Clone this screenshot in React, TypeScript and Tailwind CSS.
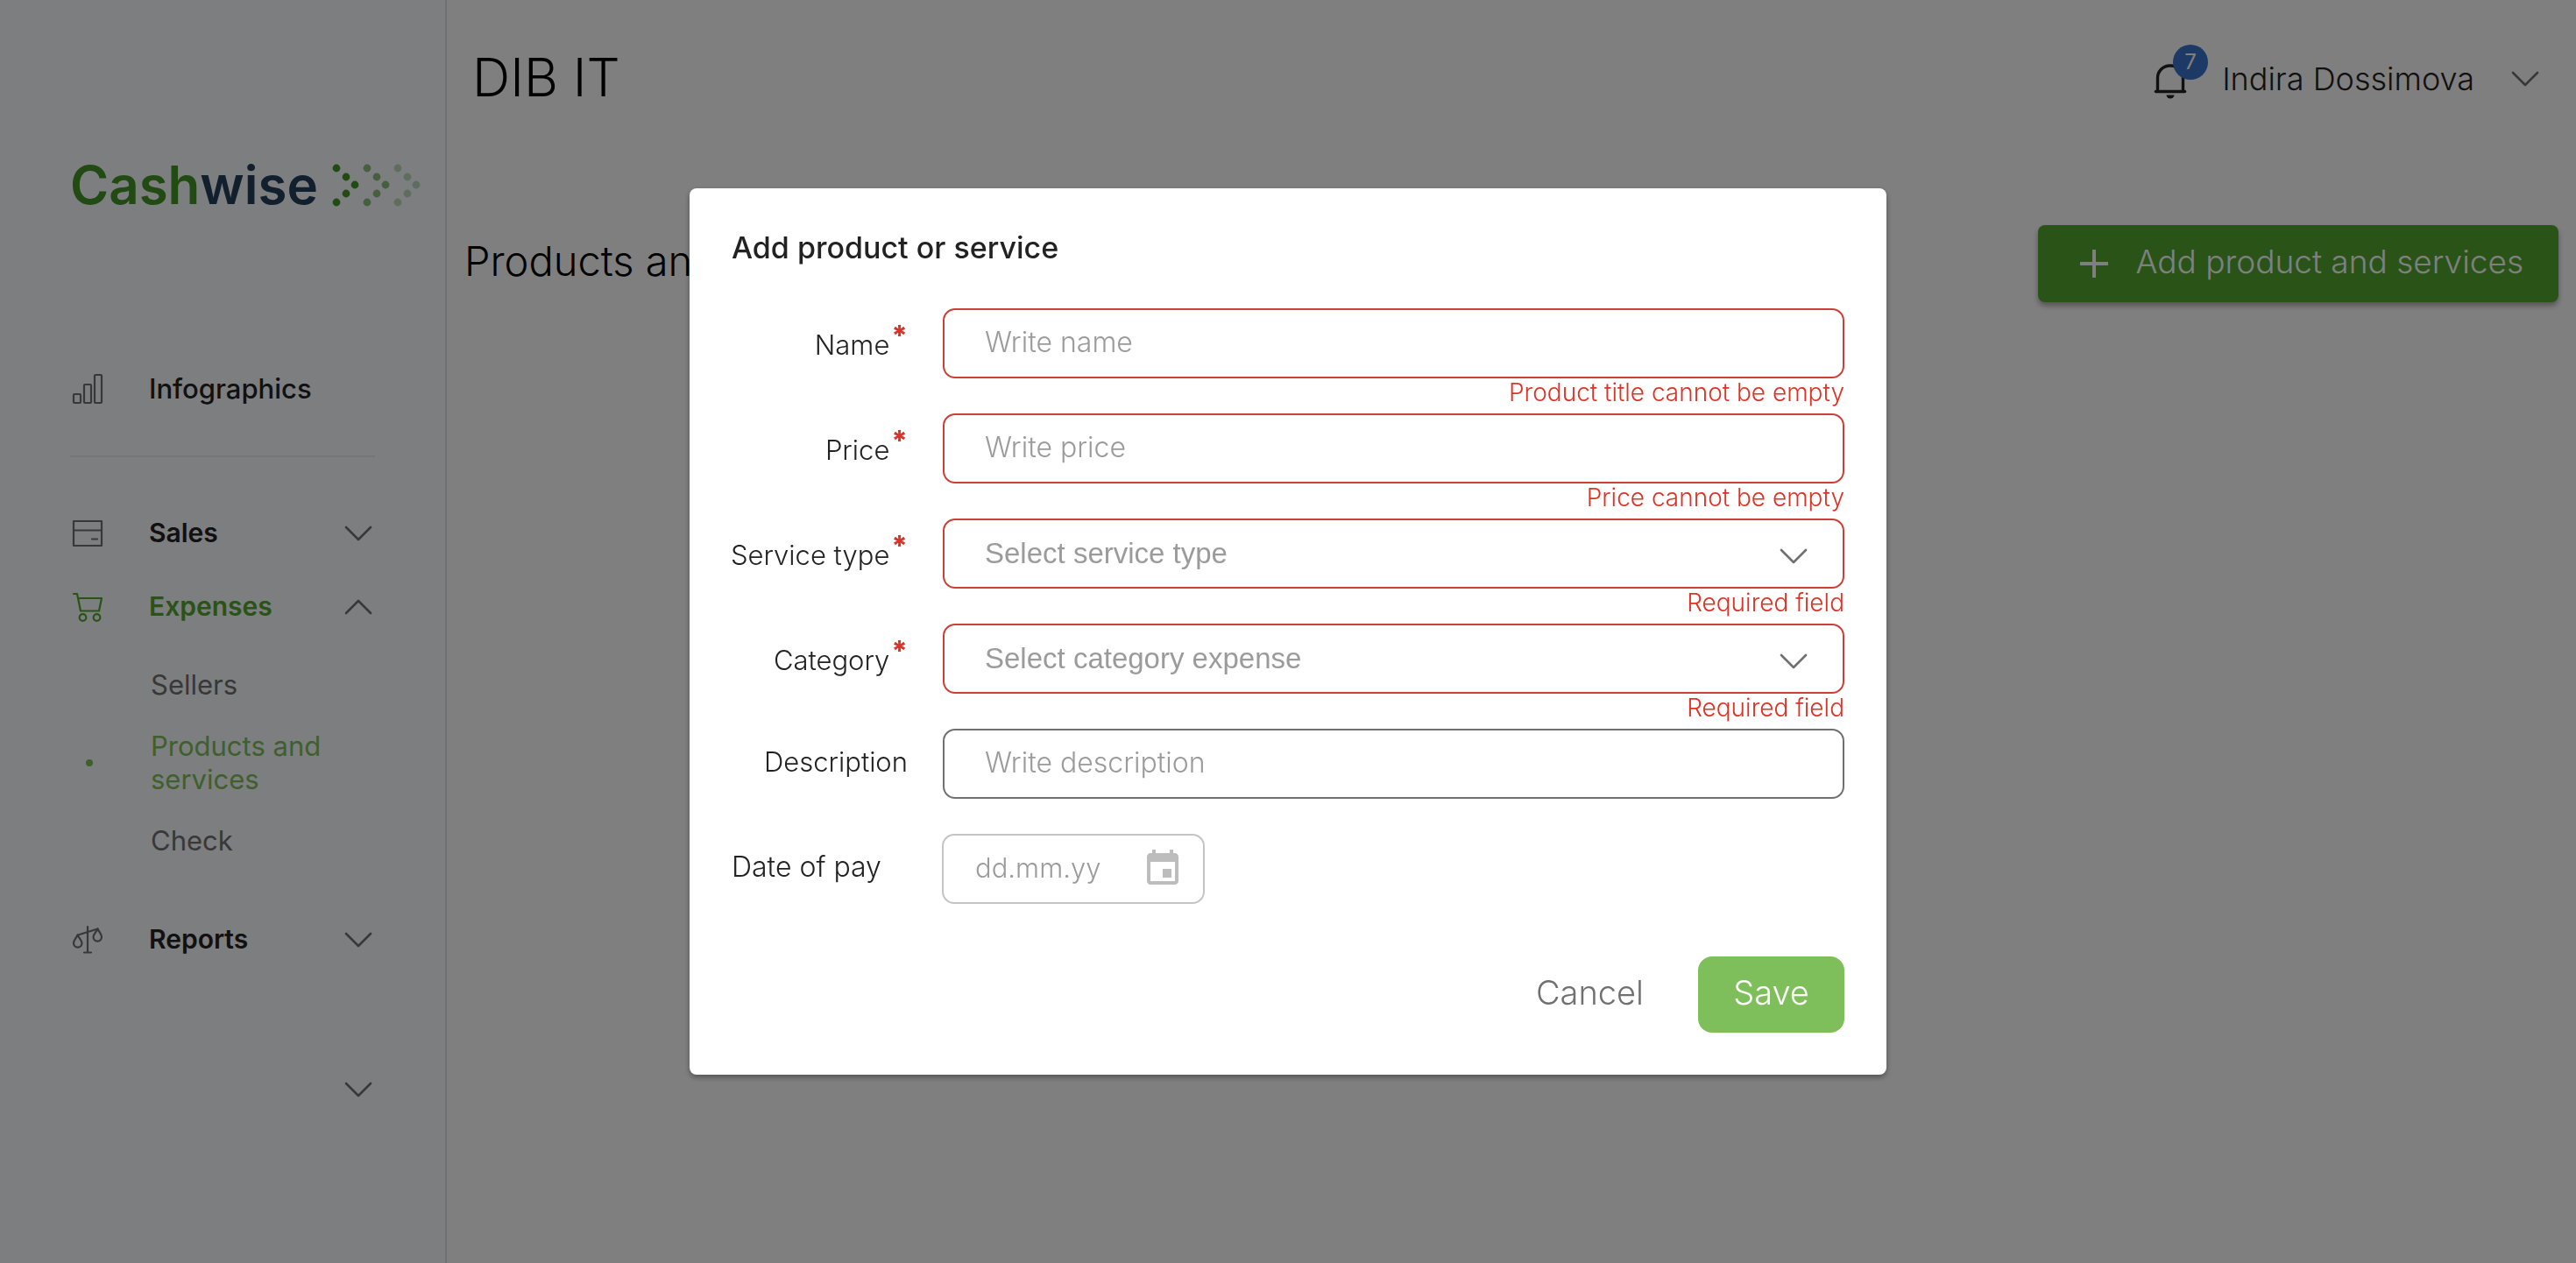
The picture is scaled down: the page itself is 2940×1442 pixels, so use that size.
import type { ReactNode } from "react";

function Chevron({ up = false, className = "" }: { up?: boolean; className?: string }) {
  return (
    <svg viewBox="0 0 32 18" className={"h-[18px] w-8 shrink-0 " + className} fill="none" stroke="currentColor" strokeWidth="2.6" strokeLinecap="round" strokeLinejoin="round" aria-hidden="true">
      <path d={up ? "M2 16 16 2 30 16" : "M2 2 16 16 30 2"} />
    </svg>
  );
}

function LogoDots() {
  const groups = [
    { x: 0, o: 1 },
    { x: 35, o: 0.6 },
    { x: 70, o: 0.32 },
  ];
  const dots = [[5, 5], [16, 15], [26, 24], [16, 34], [5, 44]];
  return (
    <svg viewBox="0 0 101 49" className="h-[49px] w-[101px] shrink-0" fill="#449527" aria-hidden="true">
      {groups.map((g) => (
        <g key={g.x} opacity={g.o}>
          {dots.map(([x, y]) => (
            <circle key={x + "-" + y} cx={x + g.x} cy={y} r="4.4" />
          ))}
        </g>
      ))}
    </svg>
  );
}

const iconClass = "h-9 w-9 shrink-0";

function BarsIcon() {
  return (
    <svg viewBox="0 0 36 36" className={iconClass} fill="none" stroke="currentColor" strokeWidth="2.2" aria-hidden="true">
      <rect x="2" y="24" width="8" height="10" rx="1" />
      <rect x="14" y="13" width="8" height="21" rx="1" />
      <rect x="26" y="2" width="8" height="32" rx="1" />
    </svg>
  );
}

function CardIcon() {
  return (
    <svg viewBox="0 0 36 36" className={iconClass} fill="none" stroke="currentColor" strokeWidth="2.2" strokeLinejoin="round" strokeLinecap="round" aria-hidden="true">
      <rect x="2" y="4" width="32" height="28" />
      <path d="M2 14.500h32M23 24.500h6" />
    </svg>
  );
}

function CartIcon() {
  return (
    <svg viewBox="0 0 36 36" className={iconClass} fill="none" stroke="currentColor" strokeWidth="2.2" strokeLinejoin="round" strokeLinecap="round" aria-hidden="true">
      <path d="M2 3h4l4 19.500h21L34 8H7.200" />
      <circle cx="12.500" cy="30" r="3.800" />
      <circle cx="28.500" cy="30" r="3.800" />
    </svg>
  );
}

function ScalesIcon() {
  return (
    <svg viewBox="0 0 36 36" className={iconClass} fill="none" stroke="currentColor" strokeWidth="2.2" strokeLinejoin="round" strokeLinecap="round" aria-hidden="true">
      <path d="M18 3v29M14 32.500h8M7 12.500 29.500 5.500" />
      <path d="M6.500 12.500C5 16 2 18.500 2 21.800a4.700 4.700 0 0 0 9.500 0c0-3.300-3.500-5.800-5-9.300Z" />
      <path d="M29.500 5.500c-1.500 3.500-5 6-5 9.300a4.700 4.700 0 0 0 9.500 0c0-3.300-3-5.800-4.500-9.300Z" />
    </svg>
  );
}

function BellIcon() {
  return (
    <svg viewBox="0 0 38 42" className="h-[42px] w-[38px]" fill="none" stroke="currentColor" aria-hidden="true">
      <path d="M4.500 33V18.500a14 14 0 0 1 14-14.500h1a14 14 0 0 1 14 14.500V33" strokeWidth="3.400" />
      <path d="M2.500 33.500h33" strokeWidth="3.600" strokeLinecap="round" />
      <path d="M14.500 37.500h9a4.500 4 0 0 1-9 0Z" fill="currentColor" stroke="none" />
    </svg>
  );
}

function CalendarIcon() {
  return (
    <svg viewBox="0 0 24 24" className="h-12 w-12" fill="currentColor" aria-hidden="true">
      <path d="M17 12h-5v5h5v-5zM16 1v2H8V1H6v2H5c-1.110 0-1.990.9-1.990 2L3 19c0 1.100.89 2 2 2h14c1.100 0 2-.9 2-2V5c0-1.100-.9-2-2-2h-1V1h-2zm3 18H5V8h14v11z" />
    </svg>
  );
}

function NavItem({ icon, label, open, active = false }: { icon?: ReactNode; label?: string; open?: boolean; active?: boolean }) {
  return (
    <button type="button" aria-label={label ?? "More"} className={"flex h-[84px] w-full items-center text-left text-[30px] font-semibold " + (active ? "text-[#52a62e]" : "text-[#222]")}>
      <span className={"w-[88px] " + (active ? "" : "text-[#707070]")}>{icon}</span>
      <span className="flex-1 pb-0.5">{label}</span>
      {open !== undefined && <Chevron up={open} className="text-[#707070]" />}
    </button>
  );
}

function Sidebar() {
  return (
    <aside className="flex w-[510px] shrink-0 flex-col border-r-2 border-[#e3e3e3] bg-[#fafcff] pl-20">
      <a href="#" className="mt-44 flex h-[70px] items-center gap-4 text-[60px] font-semibold">
        <span>
          <span className="text-[#449527]">Cash</span>
          <span className="text-[#24405a]">wise</span>
        </span>
        <LogoDots />
      </a>
      <nav className="mr-20 mt-[156px]">
        <a href="#" className="flex h-[84px] items-center pl-0.5 text-[31px] font-medium text-[#222]">
          <span className="w-[88px] text-[#707070]"><BarsIcon /></span>
          Infographics
        </a>
        <hr className="mt-[34px] border-t-2 border-[#ebecee]" />
        <div className="mt-[45px] pl-0.5 pr-[3px]">
          <NavItem icon={<CardIcon />} label="Sales" open={false} />
          <NavItem icon={<CartIcon />} label="Expenses" open={true} active />
          <ul className="text-[31px] leading-[38px] text-[#707070]">
            <li className="mt-7 pl-[90px]"><a href="#">Sellers</a></li>
            <li className="mt-8 flex items-center text-[#7fbf5b]">
              <span className="ml-4 mr-16 h-2 w-2 rounded-full bg-current" />
              <a href="#" className="ml-0.5 w-52">Products and services</a>
            </li>
            <li className="mt-8 pl-[90px]"><a href="#">Check</a></li>
          </ul>
          <div className="mt-[52px]">
            <NavItem icon={<ScalesIcon />} label="Reports" open={false} />
          </div>
          <div className="mt-[87px]">
            <NavItem open={false} />
          </div>
        </div>
      </nav>
    </aside>
  );
}

function Header() {
  return (
    <header className="flex h-[180px] items-center pl-[29px] pr-[42px]">
      <h1 className="flex-1 pb-1 text-[60px] font-light">DIB IT</h1>
      <button type="button" aria-label="Notifications, 7 new" className="relative mt-1 text-[#222]">
        <BellIcon />
        <span className="absolute -top-5 left-[22px] flex h-10 w-10 items-center justify-center rounded-full bg-[#3b72cd] text-2xl text-white">7</span>
      </button>
      <button type="button" className="ml-10 flex items-center gap-[42px] text-[36px] font-light text-[#222]">
        Indira Dossimova
        <Chevron className="text-[#707070]" />
      </button>
    </header>
  );
}

const boxBase = "h-20 w-full rounded-[14px] border-2 bg-white pl-[46px] outline-none ";
const boxError = boxBase + "border-[#cc3f38] ";
const boxPlain = boxBase + "border-[#707070] ";
const inputText = "pb-1 text-[32px] font-light text-[#222] placeholder:text-[#9b9b9b]";

function Row({ id, label, required = false, error, children }: { id: string; label: string; required?: boolean; error?: string; children: ReactNode }) {
  return (
    <div className="grid h-[120px] grid-cols-[201px_1fr] gap-x-10">
      <label htmlFor={id} className={"flex h-20 items-center justify-end whitespace-nowrap text-[31px] font-light text-[#222] " + (required ? "pt-1" : "pb-1")}>
        <span>
          {label}
          {required && <sup className="ml-0.5 -top-2.5 text-[32px] font-extrabold text-[#dd3327]">*</sup>}
        </span>
      </label>
      <div>
        {children}
        {error && <p className="text-right text-[28px] leading-8 font-light text-[#dd3327]">{error}</p>}
      </div>
    </div>
  );
}

function SelectBox({ id, placeholder }: { id: string; placeholder: string }) {
  return (
    <div className="relative">
      <select id={id} defaultValue="" className={boxError + "appearance-none font-['Liberation_Sans',sans-serif] text-[33px] text-[#9b9b9b]"}>
        <option value="">{placeholder}</option>
      </select>
      <Chevron className="pointer-events-none absolute right-[42px] top-[34px] text-[#707070]" />
    </div>
  );
}

function Modal() {
  return (
    <div className="fixed inset-0 flex items-center justify-center bg-black/50">
      <form role="dialog" aria-labelledby="dialog-title" className="w-full max-w-[1366px] rounded-lg bg-white p-12 shadow-[0_3px_6px_rgba(0,0,0,0.35)]">
        <h2 id="dialog-title" className="mb-[49px] text-[34px] leading-10 font-medium text-[#222]">Add product or service</h2>
        <Row id="name" label="Name" required error="Product title cannot be empty">
          <input id="name" placeholder="Write name" className={boxError + inputText} />
        </Row>
        <Row id="price" label="Price" required error="Price cannot be empty">
          <input id="price" placeholder="Write price" className={boxError + inputText} />
        </Row>
        <Row id="type" label="Service type" required error="Required field">
          <SelectBox id="type" placeholder="Select service type" />
        </Row>
        <Row id="category" label="Category" required error="Required field">
          <SelectBox id="category" placeholder="Select category expense" />
        </Row>
        <Row id="description" label="Description">
          <input id="description" placeholder="Write description" className={boxPlain + inputText} />
        </Row>
        <div className="flex h-20 items-center">
          <label htmlFor="date" className="w-60 pb-1 text-[32px] font-light text-[#222]">Date of pay</label>
          <div className="flex h-20 w-[300px] items-center rounded-[14px] border-2 border-[#c4c4c4] pl-9 pr-[22px]">
            <input id="date" placeholder="dd.mm.yy" className="w-full min-w-0 flex-1 pb-0.5 text-[31px] font-light outline-none placeholder:text-[#9b9b9b]" />
            <button type="button" aria-label="Choose date" className="text-[#bdbdbd]"><CalendarIcon /></button>
          </div>
        </div>
        <div className="mt-[60px] flex justify-end gap-[30px]">
          <button type="button" className="h-[87px] px-8 pb-1 text-[38px] font-light text-[#707070]">Cancel</button>
          <button type="submit" className="h-[87px] w-[167px] rounded-2xl bg-[#7fbf5b] pb-1 text-[38px] font-light text-white">Save</button>
        </div>
      </form>
    </div>
  );
}

export default function App() {
  return (
    <div className="flex min-h-screen bg-white font-['Inter',sans-serif] text-black">
      <Sidebar />
      <div className="min-w-0 flex-1">
        <Header />
        <main className="flex items-center justify-between pl-5 pr-5 pt-[77px]">
          <h2 className="pb-1.5 text-[47px] font-light">Products and services</h2>
          <button type="button" className="flex h-[88px] items-center gap-6 rounded-lg bg-[#52a62e] px-10 text-[37px] font-light text-white shadow-[0_4px_6px_rgba(0,0,0,0.35)]">
            <svg viewBox="0 0 48 48" className="h-12 w-12" fill="none" stroke="currentColor" strokeWidth="4" aria-hidden="true">
              <path d="M24 8v32M8 24h32" />
            </svg>
            <span className="pb-1">Add product and services</span>
          </button>
        </main>
      </div>
      <Modal />
    </div>
  );
}
